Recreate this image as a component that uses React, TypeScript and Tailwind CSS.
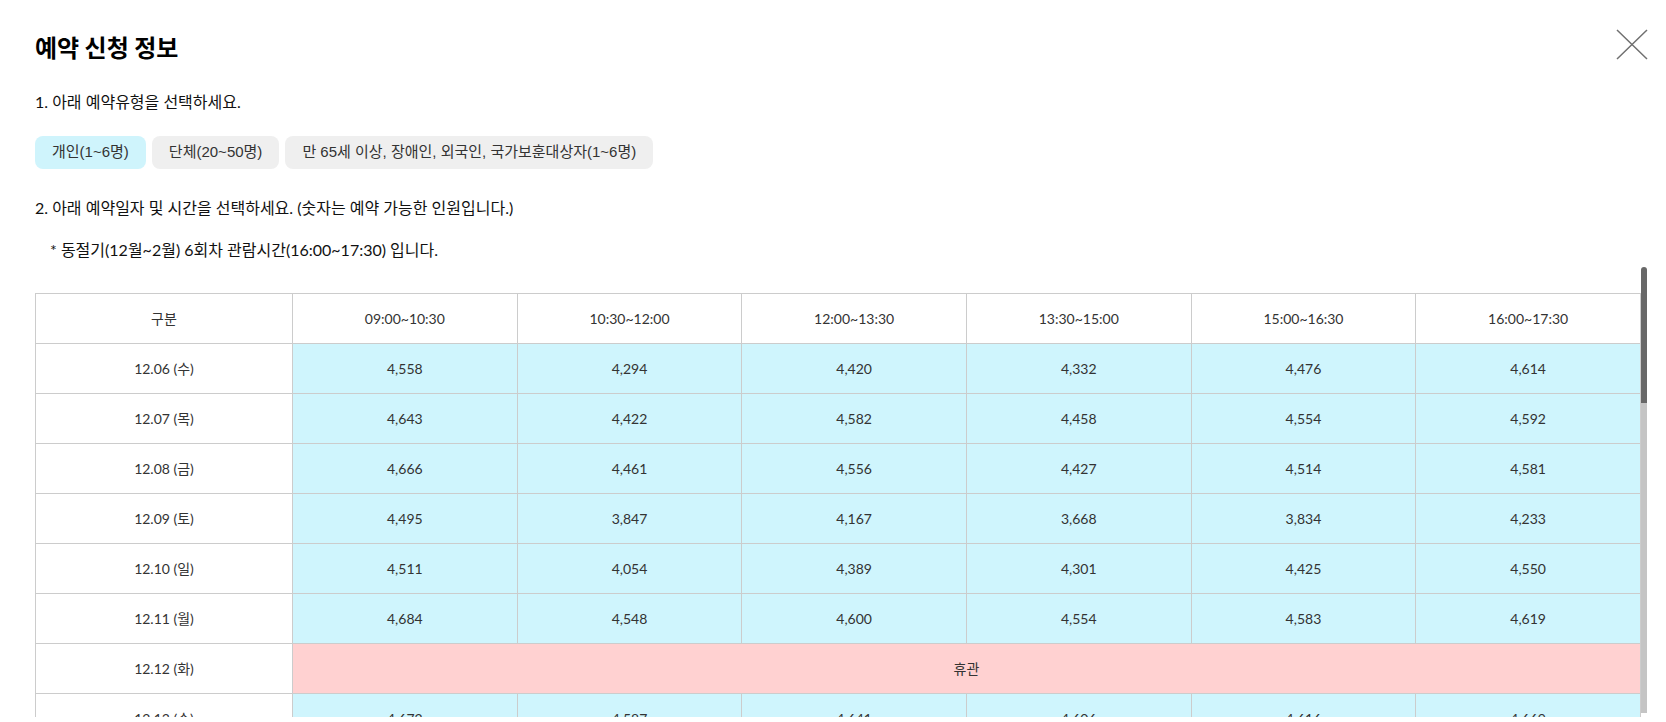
import React from "react";

const days = ["일", "월", "화", "수", "목", "금", "토"];
const times = ["09:00~10:30", "10:30~12:00", "12:00~13:30", "13:30~15:00", "15:00~16:30", "16:00~17:30"];

const known: Record<number, number[]> = {
  6: [4558, 4294, 4420, 4332, 4476, 4614],
  7: [4643, 4422, 4582, 4458, 4554, 4592],
  8: [4666, 4461, 4556, 4427, 4514, 4581],
  9: [4495, 3847, 4167, 3668, 3834, 4233],
  10: [4511, 4054, 4389, 4301, 4425, 4550],
  11: [4684, 4548, 4600, 4554, 4583, 4619],
  13: [4672, 4587, 4641, 4606, 4616, 4669],
};

function gen(d: number): number[] {
  const out: number[] = [];
  let s = d * 7919;
  for (let i = 0; i < 6; i++) {
    s = (s * 1103515245 + 12345) % 2147483648;
    out.push(4300 + (s % 400));
  }
  return out;
}

const rows = Array.from({ length: 26 }, (_, i) => {
  const d = 6 + i;
  const dow = (3 + i) % 7;
  return {
    label: `12.${String(d).padStart(2, "0")} (${days[dow]})`,
    closed: dow === 2,
    vals: known[d] ?? gen(d),
  };
});

const fmt = (n: number) => n.toLocaleString("en-US");

export default function App() {
  return (
    <div className="relative w-[1666px] h-[722px] overflow-hidden bg-white text-[#111] font-['Lato','Noto_Sans_CJK_KR',sans-serif]">
      <button className="absolute left-[1616px] top-[29px] w-[32px] h-[31px]" aria-label="close">
        <svg width="32" height="31" viewBox="0 0 32 31">
          <path d="M1 1 L31 30 M31 1 L1 30" stroke="#707070" strokeWidth="1.5" fill="none" />
        </svg>
      </button>
      <div className="pl-[35px] pr-[19px] flex flex-col">
        <h1 className="mt-[32px] h-[30px] leading-[30px] text-[24px] font-bold text-black font-['Noto_Sans_CJK_KR',sans-serif]">
          예약 신청 정보
        </h1>
        <p className="mt-[29px] h-[22px] leading-[22px] text-[16px]">1. 아래 예약유형을 선택하세요.</p>
        <div className="mt-[23px] flex gap-[6px] text-[15px] text-[#333] font-['Liberation_Sans','Noto_Sans_CJK_KR',sans-serif]">
          <button className="h-[33px] px-[17px] rounded-[8px] bg-[#cff4fc]">개인(1~6명)</button>
          <button className="h-[33px] px-[17px] rounded-[8px] bg-[#efefef]">단체(20~50명)</button>
          <button className="h-[33px] px-[17px] rounded-[8px] bg-[#efefef]">
            만 65세 이상, 장애인, 외국인, 국가보훈대상자(1~6명)
          </button>
        </div>
        <p className="mt-[28px] h-[22px] leading-[22px] text-[16px]">
          2. 아래 예약일자 및 시간을 선택하세요. (숫자는 예약 가능한 인원입니다.)
        </p>
        <p className="mt-[20px] pl-[15px] h-[22px] leading-[22px] text-[16px]">
          * 동절기(12월~2월) 6회차 관람시간(16:00~17:30) 입니다.
        </p>
        <div className="mt-[4px] h-[452px] w-[1612px] flex">
          <div className="w-[1606px] h-full overflow-hidden pt-[28px]">
            <table className="w-[1606px] table-fixed border-collapse text-[14px] text-[#333]">
              <colgroup>
                <col className="w-[257px]" />
                {times.map((t) => (
                  <col key={t} />
                ))}
              </colgroup>
              <thead>
                <tr>
                  <th className="h-[50px] border border-[#cccccc] font-normal">구분</th>
                  {times.map((t) => (
                    <th key={t} className="h-[50px] border border-[#cccccc] font-normal">
                      {t}
                    </th>
                  ))}
                </tr>
              </thead>
              <tbody>
                {rows.map((r) => (
                  <tr key={r.label}>
                    <td className="h-[50px] border border-[#cccccc] text-center">{r.label}</td>
                    {r.closed ? (
                      <td colSpan={6} className="h-[50px] border border-[#cccccc] text-center bg-[#ffd1d1]">
                        휴관
                      </td>
                    ) : (
                      r.vals.map((v, i) => (
                        <td key={i} className="h-[50px] border border-[#cccccc] text-center bg-[#cff5fd]">
                          {fmt(v)}
                        </td>
                      ))
                    )}
                  </tr>
                ))}
              </tbody>
            </table>
          </div>
          <div className="w-[6px] h-full pt-[2px] pb-[4px] flex flex-col">
            <div className="h-[136px] rounded-t-[3px] bg-[#686868]" />
            <div className="flex-1 bg-[#c4c4c4]" />
          </div>
        </div>
      </div>
    </div>
  );
}
